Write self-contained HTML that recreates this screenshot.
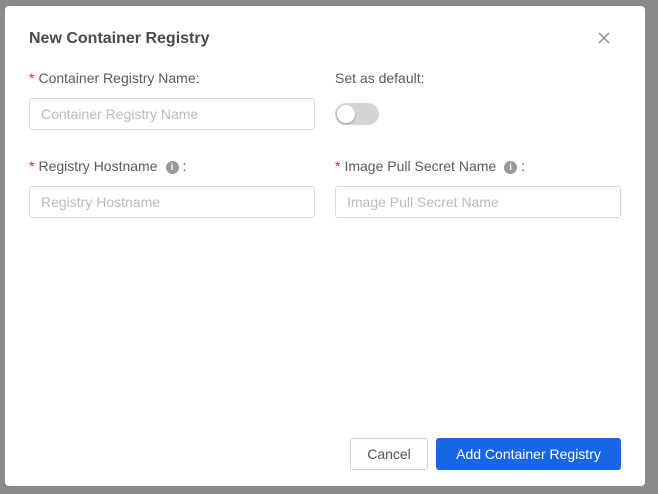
<!DOCTYPE html><html><head><style>
body{margin:0;width:658px;height:494px;background:#898a8b;font-family:"Liberation Sans",sans-serif;position:relative;overflow:hidden}
.m{position:absolute;left:5px;top:6px;width:640px;height:480px;background:#fff;border-radius:4px}
.a{position:absolute}
.t{left:24px;top:24px;font-size:16px;font-weight:bold;color:#4a4a4a}
.l{font-size:14px;color:#5a5a5a;line-height:16px}
.l b{color:#f5222d;font-weight:normal;margin-right:4px}
.i{width:284px;height:30px;border:1px solid #d9d9d9;border-radius:3px;box-sizing:content-box;font-size:14px;color:#bbb;line-height:30px;padding-left:0}
.i span{margin-left:11px}
.info{display:inline-block;width:13px;height:13px;border-radius:50%;background:#999;color:#fff;font-size:10px;line-height:13px;text-align:center;font-weight:bold;margin:0 4px 0 8px;vertical-align:1px}
</style></head><body><div class="m">
<div class="a t">New Container Registry</div>
<svg class="a" style="left:593px;top:26px" width="12" height="12"><path d="M1 1L11 11M11 1L1 11" stroke="#888" stroke-width="1.3"/></svg>
<div class="a l" style="left:24px;top:64px"><b>*</b>Container Registry Name:</div>
<div class="a l" style="left:330px;top:64px">Set as default:</div>
<div class="a i" style="left:24px;top:92px"><span>Container Registry Name</span></div>
<div class="a" style="left:330px;top:97px;width:44px;height:22px;border-radius:11px;background:#d4d4d4"><div style="position:absolute;left:2px;top:2px;width:18px;height:18px;border-radius:50%;background:#fff;box-shadow:0 1px 2px rgba(0,0,0,.3)"></div></div>
<div class="a l" style="left:24px;top:152px"><b>*</b>Registry Hostname<span class="info">i</span>:</div>
<div class="a l" style="left:330px;top:152px"><b>*</b>Image Pull Secret Name<span class="info">i</span>:</div>
<div class="a i" style="left:24px;top:180px"><span>Registry Hostname</span></div>
<div class="a i" style="left:330px;top:180px"><span>Image Pull Secret Name</span></div>
<div class="a" style="left:345px;top:432px;width:76px;height:30px;border:1px solid #d0d0d0;border-radius:3px;text-align:center;line-height:30px;font-size:14px;color:#555">Cancel</div>
<div class="a" style="left:431px;top:432px;width:185px;height:32px;background:#1766e6;border-radius:3px;text-align:center;line-height:32px;font-size:14px;color:#fff">Add Container Registry</div>
</div></body></html>
